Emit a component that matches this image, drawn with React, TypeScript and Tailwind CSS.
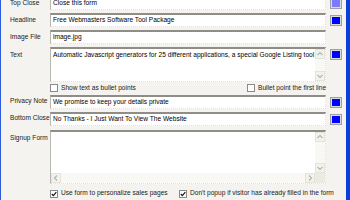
import React from "react";

const font = { fontFamily: '"Liberation Sans", Arial, sans-serif' };

const fieldBorder =
  "bg-white border-t-2 border-t-[#8f8d86] border-l border-l-[#b9b7b0] border-r border-r-[#eadcdc] border-b border-b-[#eadcdc] [border-right-style:dotted] [border-bottom-style:dotted]";

function Field({ value }: { value: string }) {
  return (
    <div
      className={`w-[276px] h-[14px] shrink-0 ${fieldBorder} flex items-center pl-[2px] text-[6.6px] leading-none text-black whitespace-nowrap overflow-hidden`}
    >
      {value}
    </div>
  );
}

function Chevron({ dir }: { dir: "up" | "down" | "left" | "right" }) {
  const d =
    dir === "up"
      ? "M2.5 6 L5 3.5 L7.5 6"
      : dir === "down"
      ? "M2.5 4 L5 6.5 L7.5 4"
      : dir === "left"
      ? "M6 2.5 L3.5 5 L6 7.5"
      : "M4 2.5 L6.5 5 L4 7.5";
  return (
    <div className="w-[10px] h-[10px] shrink-0 bg-[#f3f3ee] border border-[#e4e4dc] flex items-center justify-center">
      <svg width="8" height="8" viewBox="1 1 8 8">
        <path d={d} fill="none" stroke="#b5b5ad" strokeWidth="1.2" />
      </svg>
    </div>
  );
}

function Swatch({ color }: { color: string }) {
  return (
    <div className="w-[12px] h-[11px] border border-[#a0a0a0] p-[1px] bg-[#dcdcdc] shrink-0">
      <div className="w-full h-full" style={{ backgroundColor: color }} />
    </div>
  );
}

function Check({ checked }: { checked?: boolean }) {
  return (
    <div className="w-[8px] h-[8px] bg-white border border-[#8a8a8a] flex items-center justify-center shrink-0">
      {checked && (
        <svg width="6" height="6" viewBox="0 0 6 6">
          <path d="M0.8 3 L2.4 4.6 L5.3 1.2" fill="none" stroke="#1a1a1a" strokeWidth="1.3" />
        </svg>
      )}
    </div>
  );
}

function Label({ text }: { text: string }) {
  return (
    <div className="w-[49px] shrink-0 pl-[9px] text-[6.6px] leading-none text-[#1a1a1a] whitespace-nowrap">
      {text}
    </div>
  );
}

function Row({ label, value, swatch }: { label: string; value: string; swatch?: string }) {
  return (
    <div className="flex items-start h-[14px]">
      <div className="h-[14px] flex items-center">
        <Label text={label} />
      </div>
      <Field value={value} />
      <div className="ml-[4px] mt-[2px] w-[12px]">{swatch && <Swatch color={swatch} />}</div>
    </div>
  );
}

export default function App() {
  return (
    <div className="w-[350px] h-[200px] overflow-hidden flex bg-[#f4f3ef]" style={font}>
      <div className="w-[1px] h-full bg-[#2e5bd8] shrink-0" />
      <div className="flex-1 flex flex-col">
        <div className="-mt-[4px] flex flex-col gap-[3px]">
          <Row label="Top Close" value="Close this form" swatch="#7a7aff" />
          <Row label="Headline" value="Free Webmasters Software Tool Package" swatch="#0000ff" />
          <Row label="Image File" value="image.jpg" />
          <div className="flex items-start">
            <div className="pt-[5px]">
              <Label text="Text" />
            </div>
            <div className={`w-[276px] h-[35px] shrink-0 ${fieldBorder} flex`}>
              <div className="flex-1 pl-[2px] pt-[3px] text-[6.6px] leading-none text-black whitespace-nowrap overflow-hidden">
                Automatic Javascript generators for 25 different applications, a special Google Listing tool to ev
              </div>
              <div className="w-[10px] flex flex-col bg-[#f8f8f4]">
                <Chevron dir="up" />
                <div className="flex-1" />
                <Chevron dir="down" />
              </div>
            </div>
            <div className="ml-[4px] mt-[2px]">
              <Swatch color="#0000ff" />
            </div>
          </div>
        </div>
        <div className="flex items-center h-[14px] text-[6.6px] leading-none text-[#1a1a1a] whitespace-nowrap">
          <div className="w-[49px] shrink-0" />
          <Check />
          <span className="ml-[3px] w-[186px] shrink-0">Show text as bullet points</span>
          <Check />
          <span className="ml-[3px]">Bullet point the first line</span>
        </div>
        <div className="flex flex-col gap-[3px]">
          <Row label="Privacy Note" value="We promise to keep your details private" swatch="#0000ff" />
          <Row label="Bottom Close" value="No Thanks - I Just Want To View The Website" swatch="#0000ff" />
          <div className="flex items-start mt-[1px]">
            <div className="pt-[5px]">
              <Label text="Signup Form" />
            </div>
            <div className={`w-[276px] h-[54px] shrink-0 ${fieldBorder} flex flex-col`}>
              <div className="flex-1 flex">
                <div className="flex-1" />
                <div className="w-[10px] flex flex-col bg-[#f8f8f4]">
                  <Chevron dir="up" />
                  <div className="flex-1" />
                  <Chevron dir="down" />
                </div>
              </div>
              <div className="h-[10px] flex bg-[#f8f8f4]">
                <Chevron dir="left" />
                <div className="flex-1" />
                <Chevron dir="right" />
                <div className="w-[10px] bg-[#ecebe2]" />
              </div>
            </div>
          </div>
        </div>
        <div className="flex items-center h-[14px] mt-[4px] text-[6.6px] leading-none text-[#1a1a1a] whitespace-nowrap">
          <div className="w-[49px] shrink-0" />
          <Check checked />
          <span className="ml-[3px] w-[118px] shrink-0">Use form to personalize sales pages</span>
          <Check checked />
          <span className="ml-[3px]">Don't popup if visitor has already filled in the form</span>
        </div>
      </div>
      <div className="w-[4px] h-full bg-[#0b3fdc] shrink-0" />
    </div>
  );
}
